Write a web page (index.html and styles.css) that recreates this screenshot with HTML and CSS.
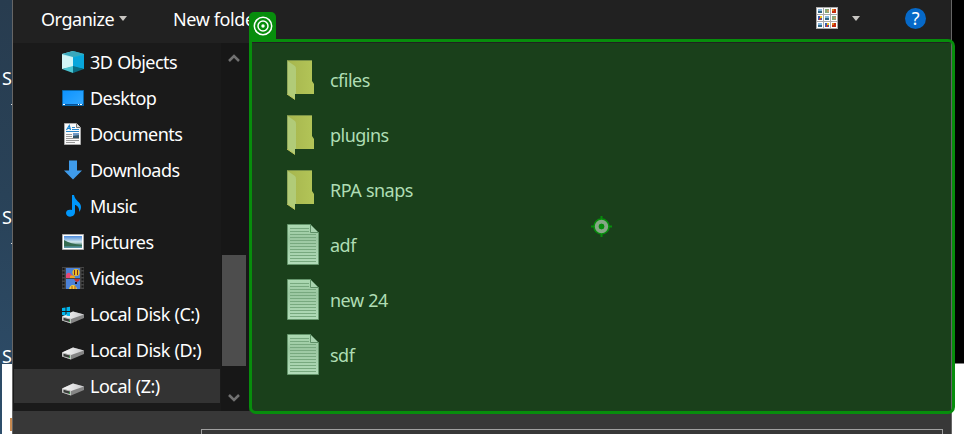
FILE: index.html
```
<!DOCTYPE html>
<html lang="en">
<head>
<meta charset="utf-8">
<title>Open file</title>
<link rel="stylesheet" href="styles.css">
</head>
<body>
<svg class="defs" width="0" height="0" aria-hidden="true">
  <defs>
    <linearGradient id="gBlue" x2="1" y2="1"><stop stop-color="#0c92ff"/><stop offset="1" stop-color="#35aaff"/></linearGradient>
    <linearGradient id="gFold"><stop stop-color="#a6b54d"/><stop offset="1" stop-color="#b3c558"/></linearGradient>
    <linearGradient id="gDisk"><stop stop-color="#fafafa"/><stop offset="1" stop-color="#c9c9cb"/></linearGradient>
    <linearGradient id="gPic" x2="0" y2="1"><stop stop-color="#4c8bdd"/><stop offset=".5" stop-color="#d4e9ee"/><stop offset=".8" stop-color="#39736b"/><stop offset="1" stop-color="#629cb0"/></linearGradient>
    <linearGradient id="gDoc" x2="0" y2="1"><stop stop-color="#addab3"/><stop offset=".35" stop-color="#9bc7a1"/><stop offset="1" stop-color="#b2dcb9"/></linearGradient>
    <symbol id="disk" viewBox="0 0 22 22"><path d="M0 13.500 11 8.500 22 11.500 22 15 9 20.500 0 17.500Z" fill="#858585"/><path d="M0 13.500 11 8.500 22 11.500 9 16Z" fill="url(#gDisk)"/><path d="M0 13.500 9 16V20.500L0 17.500Z" fill="#c5c5c5"/><path d="M1.500 14.700 8 16.500V19L1.500 17.200Z" fill="#383b38"/><path d="M7 17.500h1.200v1H7z" fill="#35c94a"/></symbol>
    <symbol id="folder" viewBox="0 0 27 40"><path d="M0 .5H25V21L27 24V34H0Z" fill="url(#gFold)"/><path d="M0 .5 8 6Q9 7 9 9V34H8V39.500L0 34Z" fill="#b1cb78"/><path d="M0 34 8 39.500" stroke="#c0c65a" fill="none"/><path d="M.5 1V34M0 .5H25" stroke="#83994d" stroke-width=".7" fill="none"/></symbol>
    <symbol id="file" viewBox="0 0 32 41"><path d="M.5.500H23.500L31.500 8.500V40.500H.5Z" fill="url(#gDoc)" stroke="#65966c"/><path d="M3 4.500H22M3 7.500H22M3 10.500H29M3 13.500H29M3 16.500H29M3 19.500H29M3 22.500H29M3 25.500H29M3 28.500H29M3 31.500H29M3 34.500H29M3 37.500H29" stroke="#78a97f"/><path d="M23.500.500V8.500H31.500Z" fill="#a9d3af" stroke="#5f9067"/></symbol>
  </defs>
</svg>
<div class="screen">
  <div class="desktop-left"><span>S</span><i></i><span>S</span><i></i><span>S</span><b></b></div>
  <div class="dialog">
    <header class="toolbar">
      <button class="organize">Organize <i class="caret"></i></button>
      <button class="new-folder">New folder</button>
      <svg class="view-icon" width="22" height="22" viewBox="0 0 22 22"><path d="M0 0H22V22H0Z" fill="#aaa"/><path d="M1 1H7V7H1ZM8 1H14V7H8ZM15 1H21V7H15ZM1 8H7V14H1ZM8 8H14V14H8ZM15 8H21V14H15ZM1 15H7V21H1ZM8 15H14V21H8ZM15 15H21V21H15Z" fill="#fff"/><path d="M2 2h4v4H2zM9 9h4v4H9zM2 16h4v4H2z" fill="#87b8df"/><path d="M2 4h4v2H2zM9 11h4v2H9zM2 18h4v2H2z" fill="#316684"/><path d="M9 2h4v4H9zM16 9h4v4h-4z" fill="#86a978"/><path d="M11 3h2v2h-2zM18 10h2v2h-2z" fill="#c69a69"/><path d="M16 2h4v4h-4zM16 16h4v4h-4z" fill="#c52c0d"/><path d="M16 2h2v2h-2zM16 16h2v2h-2z" fill="#db8520"/><path d="M2 9h4v4H2zM9 16h4v4H9z" fill="#365dae"/><path d="M4 9h2v2H4zM11 16h2v2h-2z" fill="#f0c62c"/><path d="M3 11h2v2H3zM10 18h2v2h-2z" fill="#c43b35"/></svg>
      <i class="caret view-caret"></i>
      <span class="help">?</span>
    </header>
    <div class="body">
      <nav class="tree">
        <a><svg viewBox="0 0 22 22"><path d="M0 3 11 0V14L0 18Z" fill="#aeeaf0"/><path d="M11 0 22 3V18L11 14Z" fill="#19b2d2"/><path d="M0 3 11 0 22 3 11 6Z" fill="#39a8bd"/><path d="M0 4 11 6.500V16L0 18Z" fill="#d2f5f6"/><path d="M11 6.500 22 4V18L11 16Z" fill="#08a6db"/><path d="M0 18 11 15V22Z" fill="#4ac5d2"/><path d="M11 15 22 18 11 22Z" fill="#086d83"/></svg><span>3D Objects</span></a>
        <a><svg viewBox="0 0 22 22"><path d="M.5 3.500H21.500V18.500H.5Z" fill="url(#gBlue)" stroke="#0868ad"/><path d="M1 17.500H21" stroke="#07539b"/><path d="M1 17.500H3M16 17.500h1M18 17.500h2" stroke="#fff"/></svg><span>Desktop</span></a>
        <a><svg viewBox="0 0 22 22"><path d="M2.500.500H14.500L18.500 4.500V21.500H2.500Z" fill="#fafafa" stroke="#aaa"/><path d="M14.500.500V4.500H18.500" fill="#ddd" stroke="#777"/><path d="m4.500 7 2.800-4.500L8.500 7M5.500 5.500h3" stroke="#1683ce" stroke-width="1.200" fill="none"/><path d="M10 4.500h3M10 6.500h7M4 8.500h13" stroke="#2786cb"/><path d="M4 11.500h6M4 13.500h6M4 15.500h13M4 17.500h13M4 19.500h9" stroke="#999"/><path d="M11 10h6v5h-6z" fill="#7099c5"/><path d="M11 13 17 12V15H11Z" fill="#345568"/></svg><span>Documents</span></a>
        <a><svg viewBox="0 0 22 22"><path d="M7 1.500H15V11.500H20L11 20.500 2 11.500H7Z" fill="#3f9bea"/></svg><span>Downloads</span></a>
        <a><svg viewBox="0 0 22 22"><path d="M10 0h2c1 6 7 7 7 12 0 2-1 4-2 5 1-5-3-7-4-7v7c0 6-9 6-9 1 0-3 3-4 6-3Z" fill="#0097fa"/></svg><span>Music</span></a>
        <a><svg viewBox="0 0 22 22"><path d="M.5 3.500H21.500V18.500H.5Z" fill="#fff" stroke="#aaa"/><path d="M2 5H20V17H2Z" fill="url(#gPic)"/><path d="M2 9Q8 13 20 14V15L2 15Z" fill="#356b50"/></svg><span>Pictures</span></a>
        <a><svg viewBox="0 0 22 22"><path d="M0 0H22V22H0Z" fill="#444"/><path d="M1.500 1V22M20.500 1V22" stroke="#171717" stroke-width="2" stroke-dasharray="2 1.500"/><path d="M4 1H18V11H4ZM4 12H18V22H4Z" fill="#4c82d8"/><path d="M4 8Q6 4 9 7L11 10V11H4Z" fill="#e54775"/><circle cx="14" cy="5.500" r="3.600" fill="#edbc25"/><path d="M12.500 3V8M15.500 3V8" stroke="#762e25"/><path d="M8 9Q11 7 13 10V11H8Z" fill="#f0a31d"/><path d="M12 12h6q-1 3-3 3t-3-3Z" fill="#c53131"/><path d="M14 15v2" stroke="#191926" stroke-width="2"/><path d="M7 22q1-4 4-4t4 4Z" fill="#f4ce38"/><path d="M10 19v3M13 19v3" stroke="#a95025"/></svg><span>Videos</span></a>
        <a><svg viewBox="0 0 22 22"><use href="#disk"/><path d="M0 5 3.500 4.500V8H0ZM4.500 4.300 8 3.800V8H4.500ZM0 9H3.500V12.500L0 12ZM4.500 9H8V13L4.500 12.700Z" fill="#00b6ed"/></svg><span>Local Disk (C:)</span></a>
        <a><svg viewBox="0 0 22 22"><use href="#disk"/></svg><span>Local Disk (D:)</span></a>
        <a class="selected"><svg viewBox="0 0 22 22"><use href="#disk"/></svg><span>Local (Z:)</span></a>
      </nav>
      <div class="scrollbar"><svg width="12" height="10" viewBox="0 0 12 10"><path d="m1 8 5-5 5 5" /></svg><i class="thumb"></i><svg width="12" height="10" viewBox="0 0 12 10"><path d="m1 2 5 5 5-5"/></svg></div>
      <main class="files">
        <a><svg class="folder"><use href="#folder"/></svg><span>cfiles</span></a>
        <a><svg class="folder"><use href="#folder"/></svg><span>plugins</span></a>
        <a><svg class="folder"><use href="#folder"/></svg><span>RPA snaps</span></a>
        <a><svg class="file"><use href="#file"/></svg><span>adf</span></a>
        <a><svg class="file"><use href="#file"/></svg><span>new 24</span></a>
        <a><svg class="file"><use href="#file"/></svg><span>sdf</span></a>
      </main>
    </div>
    <footer><div class="filename"></div></footer>
  </div>
  <div class="desktop-right"></div>
</div>
<div class="highlight"></div>
<div class="target-tab"><svg width="20" height="20" viewBox="0 0 20 20" fill="none" stroke="#fff"><circle cx="10" cy="10" r="8.700" stroke-width="1.500"/><circle cx="10" cy="10" r="5" stroke-width="1.500"/><circle cx="10" cy="10" r="1.700" fill="#fff" stroke="none"/></svg></div>
<svg class="anchor" width="21" height="21" viewBox="0 0 21 21" fill="none"><path d="M10.500 0V21M0 10.500H21" stroke="#078d0c" stroke-width="2"/><circle cx="10.500" cy="10.500" r="7.300" fill="#078d0c" stroke="#078d0c" stroke-width="2"/><circle cx="10.500" cy="10.500" r="4.700" stroke="#86a686" stroke-width="4"/><circle cx="10.500" cy="10.500" r="2.700" fill="#078d0c"/></svg>
</body>
</html>
```
FILE: styles.css
```
* { box-sizing: border-box; }
body { margin: 0; overflow: hidden; background: #000; color: #fff; font: 18px/24px "Noto Sans", "Open Sans", sans-serif; letter-spacing: -.52px; word-spacing: .6px; }
.defs { position: absolute; }
.screen { display: flex; width: 964px; height: 434px; }
.desktop-left { width: 12px; display: flex; flex-direction: column; padding-top: 66px; background: linear-gradient(#283c4f, #294258 45%, #2e4e6b); overflow: hidden; }
.desktop-left span { height: 24px; padding-left: 2px; flex: none; }
.desktop-left i { width: 1px; height: 1px; margin: 14px 0 100px 11px; background: #ddd; flex: none; }
.desktop-left b { flex: none; margin: -4px 0 0 2px; height: 71px; background: linear-gradient(#c78a52, #c78a52) 8px 54px / 2px 13px no-repeat #fff; }
.dialog { width: 940px; border: solid #666; border-width: 0 1px; background: #1a1a1a; display: flex; flex-direction: column; }
.toolbar { height: 43px; flex: none; display: flex; align-items: center; background: #212121; padding: 0 25px 6px 28px; }
button { border: 0; padding: 0; background: none; color: inherit; font: inherit; letter-spacing: inherit; }
.organize { width: 132px; display: flex; align-items: center; gap: 5px; letter-spacing: -.45px; }
.new-folder { letter-spacing: -.4px; }
.caret { border: solid transparent; border-width: 5px 4.500px 0; border-top-color: #c8c6c2; margin-bottom: 1px; }
.view-icon { margin-left: auto; margin-bottom: 1px; }
.view-caret { margin: 0 0 0 14px; }
.help { width: 21px; height: 21px; margin-left: 45px; border-radius: 50%; background: #0669c8; text-align: center; font: 18px/21px "Noto Sans", sans-serif; }
.body { height: 368px; flex: none; display: flex; }
.tree { width: 207px; padding-top: 1px; }
.tree a { height: 36px; display: flex; align-items: center; gap: 6px; padding: 0 0 0 49px; white-space: nowrap; }
.tree svg { width: 22px; height: 22px; flex: none; }
.tree .selected { background: linear-gradient(#333, #333) 1px 1px / 206px 34px no-repeat; }
.scrollbar { width: 29px; padding: 10px 4px 8px 2px; display: flex; flex-direction: column; align-items: center; background: linear-gradient(90deg, transparent 1px, #171717 1px); }
.scrollbar path { fill: none; stroke: #717171; stroke-width: 2.500; }
.scrollbar .thumb { width: 24px; height: 111px; margin: 192px 0 27px; background: #4d4d4d; flex: none; }
.files { flex: 1; padding-top: 9px; color: #afddb4; background: #1a401b; }
.files a { height: 55px; display: flex; align-items: center; padding-left: 38px; }
.files svg { flex: none; }
.files .folder { width: 27px; height: 40px; margin-right: 16px; }
.files .file { width: 32px; height: 41px; margin: -1px 11px 0 0; }
footer { flex: 1; padding: 18px 8px 0 188px; background: #383838; }
.filename { height: 8px; border: solid #a0a0a0; border-width: 1px 1px 0; }
.desktop-right { width: 12px; background: linear-gradient(#000 363px, #fff 364px); }
.highlight { position: absolute; left: 249px; top: 39px; width: 706px; height: 375px; border: 3px solid #078d0c; border-radius: 0 7px 7px 7px; }
.target-tab { position: absolute; left: 249px; top: 12px; width: 27px; height: 28px; padding: 4px 0 0 4px; border-radius: 5px 5px 0 0; background: #078d0c; }
.anchor { position: absolute; left: 591px; top: 216px; }
```
